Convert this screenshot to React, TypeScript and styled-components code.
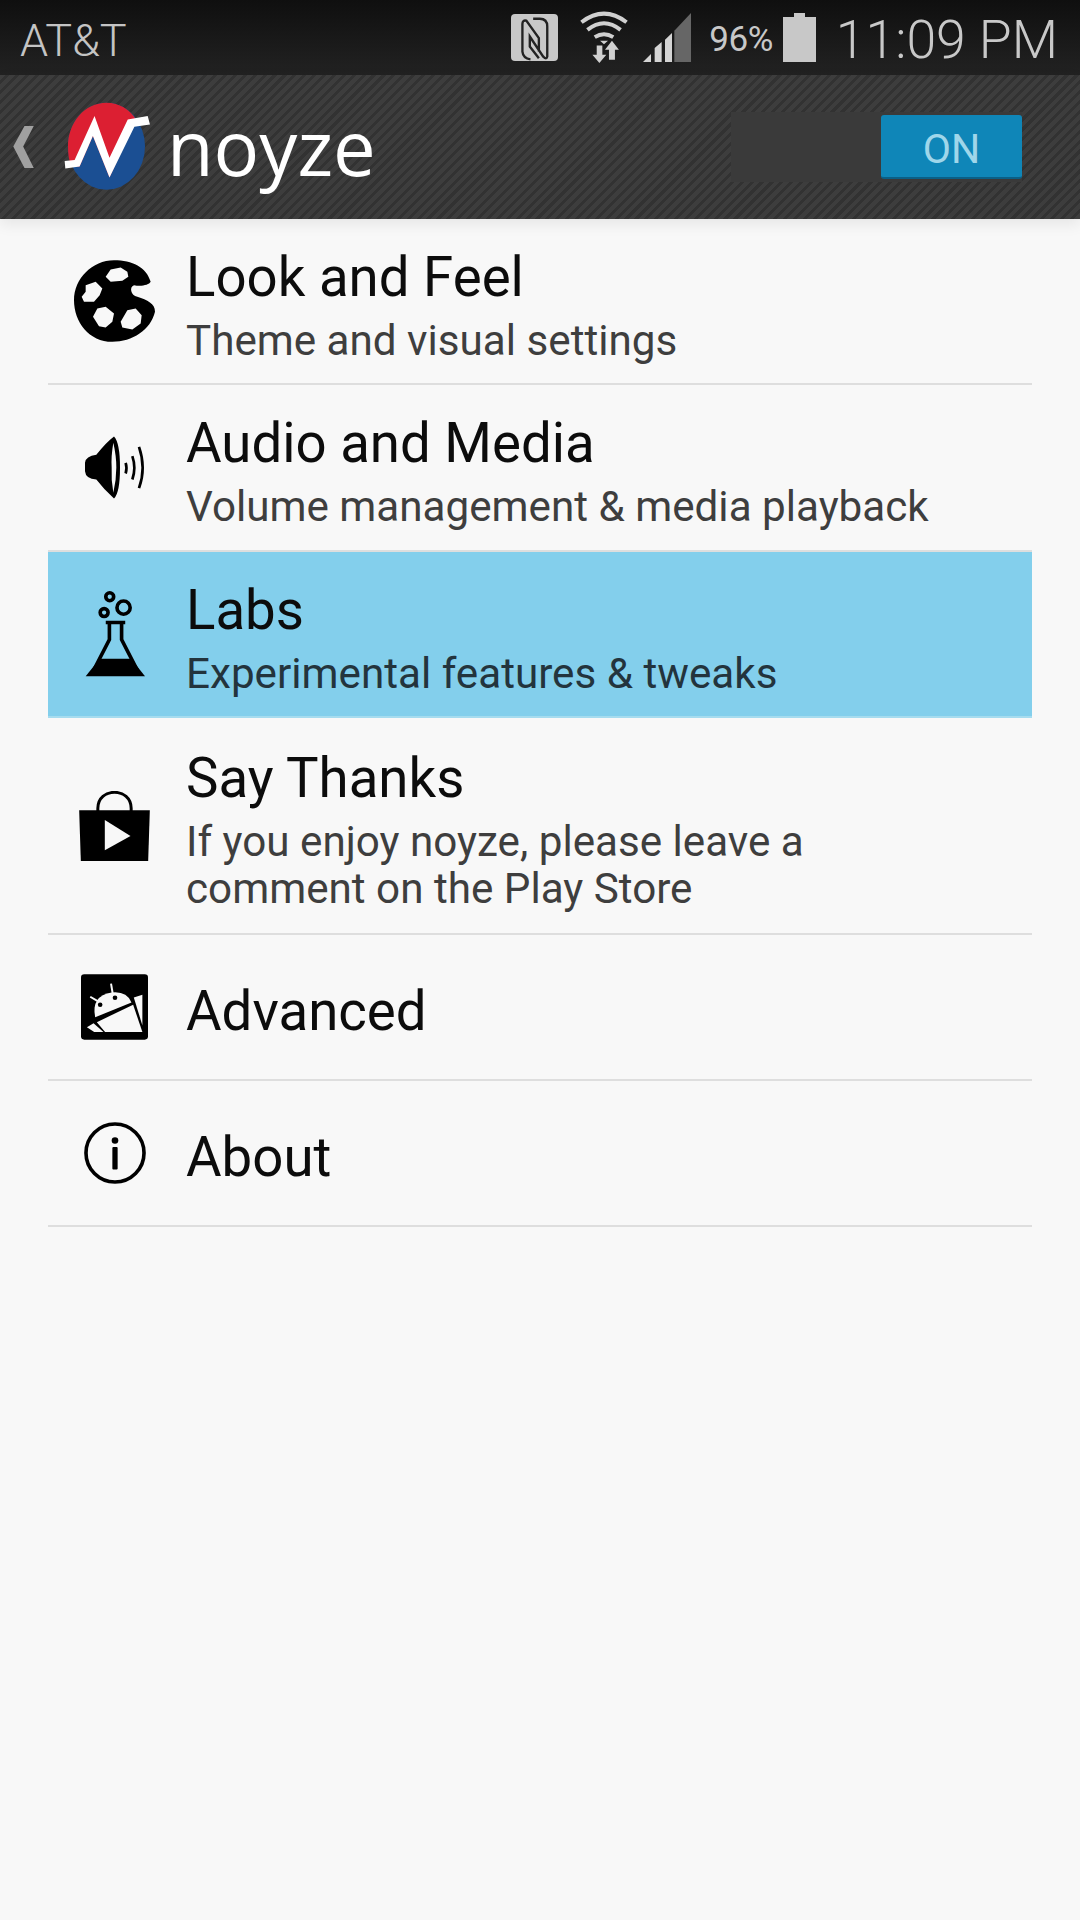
import React from "react";
import styled, { createGlobalStyle } from "styled-components";

const Global = createGlobalStyle`
  html, body { margin: 0; padding: 0; background: #f8f8f8; }
  #root { width: 1080px; height: 1920px; overflow: hidden; }
`;

const Page = styled.div`
  width: 1080px;
  height: 1920px;
  display: flex;
  flex-direction: column;
  background-color: #f8f8f8;
  font-family: Roboto, "Liberation Sans", sans-serif;
`;

const StatusBar = styled.div`
  height: 75px;
  flex: none;
  display: flex;
  align-items: center;
  justify-content: space-between;
  padding: 0 22px 0 20px;
  background: linear-gradient(#0f0f0f, #222222);
`;

const Carrier = styled.span`
  font-weight: 300;
  font-size: 45px;
  line-height: 75px;
  padding-top: 6px;
  color: #c4c4c4;
`;

const StatusIcons = styled.div`
  display: flex;
  align-items: center;
`;

const StatusGlyph = styled.svg<{ $left: number }>`
  display: block;
  flex: none;
  margin-left: ${(p) => p.$left}px;
`;

const Battery = styled.span`
  font-size: 35px;
  font-weight: 400;
  color: #c8c8c8;
  margin-left: 18px;
  padding-top: 3px;
  letter-spacing: -0.5px;
`;

const Clock = styled.span`
  font-size: 53.5px;
  font-weight: 300;
  color: #c8c8c8;
  margin-left: 20px;
  padding-top: 4px;
`;

const ActionBar = styled.div`
  height: 144px;
  flex: none;
  display: flex;
  align-items: center;
  padding: 0 58px 0 13px;
  position: relative;
  z-index: 1;
  background-color: #383838;
  background-image: repeating-linear-gradient(
    135deg,
    #3d3d3d 0 4px,
    #323232 4px 7px
  );
  box-shadow: 0 5px 14px rgba(0, 0, 0, 0.08);
`;

const BackChevron = styled.svg`
  display: block;
  flex: none;
  margin-right: 29px;
`;

const AppTitle = styled.span`
  font-family: "Open Sans", sans-serif;
  font-size: 76px;
  color: #ffffff;
  margin-left: 16px;
  line-height: 76px;
  flex: 1;
`;

const Toggle = styled.div`
  display: flex;
  align-items: center;
  height: 70px;
  background: #3a3a3a;
`;

const ToggleOff = styled.div`
  width: 150px;
`;

const ToggleOn = styled.div`
  width: 141px;
  height: 64px;
  display: flex;
  align-items: center;
  justify-content: center;
  padding-top: 6px;
  background: #0f86b8;
  border-radius: 3px;
  border-bottom: 2px solid #0a5f86;
  box-sizing: border-box;
  font-size: 41px;
  color: #9fd6ea;
`;

const List = styled.div`
  margin: 0 48px;
  display: flex;
  flex-direction: column;
`;

const Row = styled.div<{ $h: number; $active?: boolean }>`
  display: grid;
  grid-template-columns: 138px 1fr;
  align-items: center;
  box-sizing: border-box;
  height: ${(p) => p.$h}px;
  background: ${(p) => (p.$active ? "#83cfec" : "transparent")};
  border-bottom: 2px solid ${(p) => (p.$active ? "#a6dcef" : "#dedede")};
`;

const IconCell = styled.div`
  display: flex;
  justify-content: center;
  align-items: center;
  padding-right: 5px;
`;

const TextCell = styled.div`
  display: flex;
  flex-direction: column;
  padding: 6px 56px 0 0;
`;

const Title = styled.div`
  font-size: 54.6px;
  line-height: 64px;
  color: #0c0c0c;
  &:only-child {
    margin-top: 1px;
  }
`;

const Subtitle = styled.div<{ $active?: boolean }>`
  font-size: 42.2px;
  line-height: 47px;
  margin-top: 8px;
  color: ${(p) => (p.$active ? "#23343d" : "#3e3e3e")};
`;

const Palette = () => (
  <svg width="81" height="82" viewBox="15 20 243 245">
    <path
      fillRule="evenodd"
      fill="#000"
      d="M135 20C190 20 232 40 245 85C240 95 215 100 195 95C180 100 185 125 205 130C235 140 258 150 258 175C245 230 190 265 130 265C60 265 15 205 15 140C15 75 70 20 135 20Z
      M125 48L155 42L175 55L178 70L160 82L125 85L110 70Z
      M50 95L80 85L100 105L92 125L75 145L45 145L38 130L50 115Z
      M85 165L110 160L135 180L130 205L110 222L90 218L72 190Z
      M175 170L200 165L218 185L215 210L190 228L160 222L155 205Z"
    />
  </svg>
);

const Speaker = () => (
  <svg width="62" height="63" viewBox="135 620 186 188">
    <path
      fill="#000"
      d="M138 700Q140 680 172 676Q200 640 225 621Q243 640 243 714Q243 790 225 807Q195 780 172 750Q140 748 138 725Z"
    />
    <path fill="#f8f8f8" d="M223 640Q232 680 232 714Q232 750 223 790Q216 750 218 714Q216 680 223 640Z" />
    <g fill="none" stroke="#000" strokeWidth="8">
      <path d="M260 700Q265 715 260 732" />
      <path d="M280 680Q292 715 280 750" />
      <path d="M300 652Q322 715 300 776" />
    </g>
  </svg>
);

const Flask = () => (
  <svg width="60" height="88" viewBox="130 1082 182 262">
    <g fill="none" stroke="#000" strokeWidth="11">
      <circle cx="205" cy="1100" r="12" />
      <circle cx="247" cy="1133" r="20" />
      <circle cx="188" cy="1148" r="12" />
      <path d="M193 1178H252M204 1178V1230L150 1335M241 1178V1230L295 1335" />
    </g>
    <path fill="#000" d="M175 1288H270L312 1341H132Z" />
  </svg>
);

const Bag = () => (
  <svg width="71" height="70" viewBox="118 120 212 210">
    <path fill="none" stroke="#000" strokeWidth="9" d="M174 180V172C174 140 198 124 224 124C250 124 274 140 274 172V180" />
    <path fill="#000" d="M118 178H330L325 330H123Z" />
    <path fill="#f8f8f8" d="M195 207L272 255L195 298Z" />
  </svg>
);

const Robot = () => (
  <svg width="67" height="66" viewBox="32 30 203 198">
    <rect x="32" y="30" width="203" height="198" rx="10" fill="#000" />
    <g fill="#f8f8f8">
      <path d="M75 160Q62 95 125 85Q170 80 185 115Z" />
      <path d="M80 175L190 122L218 205H105Z" />
      <path d="M192 100L218 92V185Z" />
      <path d="M50 190L70 178L100 205H72Z" />
    </g>
    <g fill="#000">
      <circle cx="90" cy="122" r="7" />
      <circle cx="135" cy="101" r="7" />
    </g>
    <g stroke="#f8f8f8" strokeWidth="6">
      <path d="M123 58L128 88" />
      <path d="M60 98L84 112" />
    </g>
  </svg>
);

const Info = () => (
  <svg width="62" height="62" viewBox="128 1116 188 188">
    <circle cx="222" cy="1210" r="88" fill="none" stroke="#000" strokeWidth="11" />
    <circle cx="222" cy="1172" r="10" fill="#000" />
    <rect x="214" y="1192" width="16" height="68" rx="3" fill="#000" />
  </svg>
);

const Logo = () => (
  <svg width="88" height="90" viewBox="190 38 265 270">
    <ellipse cx="321" cy="171" rx="116" ry="131" fill="#1b4f93" />
    <path
      fill="#dc1f32"
      d="M205 171C205 100 255 40 321 40C360 40 390 60 410 90L330 265L280 140L240 232L215 232C208 215 205 195 205 171Z"
    />
    <path
      fill="#fff"
      d="M195 215L225 212L285 80L330 205L385 90L445 80L452 105L405 112L330 265L280 140L240 232L197 238Z"
    />
  </svg>
);

const rows = [
  { h: 166, icon: <Palette />, title: "Look and Feel", sub: "Theme and visual settings" },
  { h: 167, icon: <Speaker />, title: "Audio and Media", sub: "Volume management & media playback" },
  { h: 166, icon: <Flask />, title: "Labs", sub: "Experimental features & tweaks", active: true },
  { h: 217, icon: <Bag />, title: "Say Thanks", sub: "If you enjoy noyze, please leave a comment on the Play Store" },
  { h: 146, icon: <Robot />, title: "Advanced" },
  { h: 146, icon: <Info />, title: "About" },
];

export default function App() {
  return (
    <Page>
      <Global />
      <StatusBar>
        <Carrier>AT&amp;T</Carrier>
        <StatusIcons>
          <StatusGlyph $left={0} width="47" height="47" viewBox="22 28 140 140">
            <rect x="22" y="28" width="140" height="140" rx="12" fill="#c8c8c8" />
            <path
              fill="none"
              stroke="#222"
              strokeWidth="7"
              d="M80 163Q58 160 56 140V58Q56 45 68 48L105 100V140M88 42H108Q130 42 130 65V155Q128 165 118 155L78 95V125L105 160"
            />
          </StatusGlyph>
          <StatusGlyph $left={21} width="50" height="53" viewBox="225 18 150 160">
            <g fill="none" stroke="#d0d0d0" strokeWidth="12">
              <path d="M232 52Q300 0 368 52" />
              <path d="M250 75Q300 35 350 75" />
              <path d="M272 97Q300 80 328 97" />
            </g>
            <path
              fill="#d0d0d0"
              d="M288 108H312L300 118ZM278 122H295V150H307L286 175L265 150H278ZM324 108L345 135H333V165H315V135H303Z"
            />
          </StatusGlyph>
          <StatusGlyph $left={14} width="48" height="49" viewBox="418 25 144 147">
            <path fill="#666" d="M512 172H562V25L512 78Z" />
            <path fill="#d4d4d4" d="M418 172L442 148V172ZM453 172V130L474 112V172ZM484 172V105L505 85V172Z" />
          </StatusGlyph>
          <Battery>96%</Battery>
          <StatusGlyph $left={10} width="33" height="49" viewBox="0 0 33 49">
            <path fill="#c8c8c8" d="M11 0H22V4H33V49H0V4H11Z" />
          </StatusGlyph>
          <Clock>11:09 PM</Clock>
        </StatusIcons>
      </StatusBar>
      <ActionBar>
        <BackChevron width="21" height="42" viewBox="38 108 62 127">
          <path fill="#a0a0a0" d="M72 108H100L68 170L100 235H72L38 170Z" />
        </BackChevron>
        <Logo />
        <AppTitle>noyze</AppTitle>
        <Toggle>
          <ToggleOff />
          <ToggleOn>ON</ToggleOn>
        </Toggle>
      </ActionBar>
      <List>
        {rows.map((r) => (
          <Row key={r.title} $h={r.h} $active={r.active}>
            <IconCell>{r.icon}</IconCell>
            <TextCell>
              <Title>{r.title}</Title>
              {r.sub && <Subtitle $active={r.active}>{r.sub}</Subtitle>}
            </TextCell>
          </Row>
        ))}
      </List>
    </Page>
  );
}
